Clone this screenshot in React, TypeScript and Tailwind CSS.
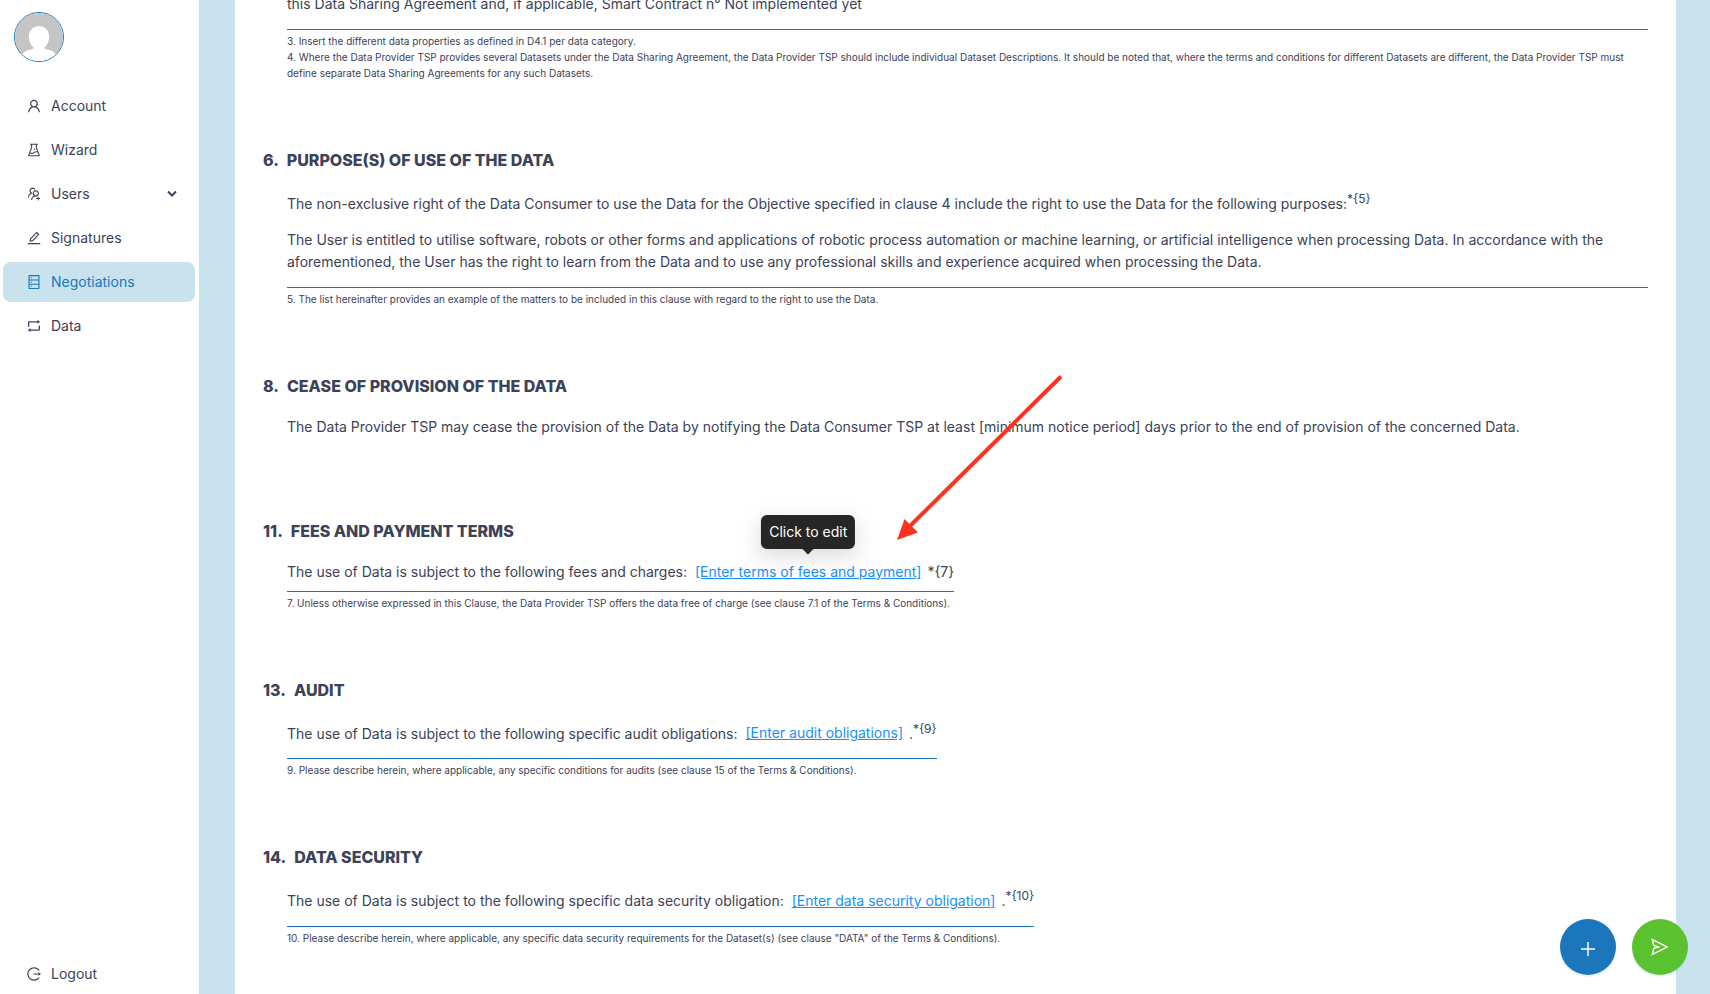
import React from 'react';
import {
  AiOutlineDatabase,
  AiOutlineEdit,
  AiOutlineExperiment,
  AiOutlineLogout,
  AiOutlinePlus,
  AiOutlineRetweet,
  AiOutlineSend,
  AiOutlineUser,
  AiOutlineUsergroupAdd,
} from 'react-icons/ai';
import type { IconType } from 'react-icons';
import clsx from 'clsx';

interface MenuEntry {
  label: string;
  icon: IconType;
  active?: boolean;
  expandable?: boolean;
}

const menu: MenuEntry[] = [
  { label: 'Account', icon: AiOutlineUser },
  { label: 'Wizard', icon: AiOutlineExperiment },
  { label: 'Users', icon: AiOutlineUsergroupAdd, expandable: true },
  { label: 'Signatures', icon: AiOutlineEdit },
  { label: 'Negotiations', icon: AiOutlineDatabase, active: true },
  { label: 'Data', icon: AiOutlineRetweet },
];

function MenuItem({ label, icon: Icon, active, expandable }: MenuEntry) {
  return (
    <a
      href="#"
      className={clsx(
        'flex h-10 items-center rounded-lg pr-4.5 pl-[23px]',
        active ? 'bg-[#c8e3ee] text-[#1b76bc]' : 'text-[#3c4257]'
      )}
    >
      <Icon className="size-4 shrink-0" />
      <span className="ml-[9px] flex-1">{label}</span>
      {expandable && (
        <svg viewBox="0 0 10 10" className="size-2.5" fill="none" stroke="currentColor" strokeWidth="2">
          <path d="M1 2.5 5 6.5 9 2.5" />
        </svg>
      )}
    </a>
  );
}

function Avatar() {
  return (
    <svg viewBox="0 0 50 50" className="size-12.5 rounded-full border border-[#1b76bc]" role="img" aria-label="Profile">
      <rect width="50" height="50" fill="#c5c5c5" />
      <path
        fill="#fff"
        d="M25 13.5c6 0 10.600 4.600 10.600 11 0 5-2.300 9-4.800 11.300-.6 1.700.4 2 2.600 2.300 4.600.7 8.100 2.600 10.100 7V50h-37v-4.900c2-4.400 5.500-6.300 10.100-7 2.200-.3 3.200-.6 2.600-2.300-2.500-2.300-4.800-6.300-4.800-11.300 0-6.400 4.600-11 10.600-11Z"
      />
    </svg>
  );
}

interface ClauseProps {
  number: number;
  title: string;
  children: React.ReactNode;
}

function Clause({ number, title, children }: ClauseProps) {
  return (
    <section className="mt-[67px] flow-root">
      <h2 className="mb-4.5 text-base leading-6 font-extrabold">
        <span className="mr-2">{number}.</span>
        {title}
      </h2>
      <div className="w-fit pl-6">{children}</div>
    </section>
  );
}

function Footnotes({ children }: { children: React.ReactNode }) {
  return <div className="border-t border-[#1b76bc] pt-[3px] text-[10px] leading-4">{children}</div>;
}

function NoteRef({ id }: { id: number }) {
  return <sup className="static align-super text-xs leading-4.5">*{`{${id}}`}</sup>;
}

function Editable({ children, tooltip }: { children: React.ReactNode; tooltip?: string }) {
  return (
    <span className="relative mr-0.5 ml-1 inline-block">
      <button type="button" className="text-[#1890ff] underline">
        {children}
      </button>
      {tooltip && (
        <span
          role="tooltip"
          className="absolute bottom-full left-1/2 mb-3 -translate-x-1/2 rounded-md bg-[#262626] px-2 py-1.5 whitespace-nowrap text-white shadow-[0_6px_16px_rgba(0,0,0,0.08),0_9px_28px_8px_rgba(0,0,0,0.05)]"
        >
          {tooltip}
          <svg viewBox="0 0 14 6" className="absolute top-full left-1/2 h-1.5 w-3.5 -translate-x-1/2" fill="#262626">
            <path d="M0 0h14c-1.500 0-2.300.6-3 1.300L8 4.800c-.6.600-1.400.6-2 0L3 1.300C2.300.6 1.500 0 0 0Z" />
          </svg>
        </span>
      )}
    </span>
  );
}

export default function App() {
  return (
    <div className="relative flex h-screen overflow-hidden bg-[#c8e3ee] font-['Inter',sans-serif] text-sm leading-5.5 text-[#3c4257]">
      <aside className="flex w-[199px] shrink-0 flex-col bg-white pt-3">
        <div className="pl-3.5">
          <Avatar />
        </div>
        <nav className="mt-6 flex flex-1 flex-col gap-1 pr-1 pl-[3px]">
          {menu.map((entry) => (
            <MenuItem key={entry.label} {...entry} />
          ))}
          <div className="mt-auto">
            <MenuItem label="Logout" icon={AiOutlineLogout} />
          </div>
        </nav>
      </aside>

      <main className="mr-[34px] ml-9 flex-1 overflow-hidden bg-white px-7">
        <div className="-mt-[7px] pl-6">
          <p className="mb-3.5">this Data Sharing Agreement and, if applicable, Smart Contract n° Not implemented yet</p>
          <Footnotes>
            <p>3. Insert the different data properties as defined in D4.1 per data category.</p>
            <p>
              4. Where the Data Provider TSP provides several Datasets under the Data Sharing Agreement, the Data
              Provider TSP should include individual Dataset Descriptions. It should be noted that, where the terms
              and conditions for different Datasets are different, the Data Provider TSP must define separate Data
              Sharing Agreements for any such Datasets.
            </p>
          </Footnotes>
        </div>

        <Clause number={6} title="PURPOSE(S) OF USE OF THE DATA">
          <p className="mb-3.5">
            The non-exclusive right of the Data Consumer to use the Data for the Objective specified in clause 4
            include the right to use the Data for the following purposes:
            <NoteRef id={5} />
          </p>
          <p className="mb-3.5">
            The User is entitled to utilise software, robots or other forms and applications of robotic process
            automation or machine learning, or artificial intelligence when processing Data. In accordance with the
            aforementioned, the User has the right to learn from the Data and to use any professional skills and
            experience acquired when processing the Data.
          </p>
          <Footnotes>
            5. The list hereinafter provides an example of the matters to be included in this clause with regard to
            the right to use the Data.
          </Footnotes>
        </Clause>

        <Clause number={8} title="CEASE OF PROVISION OF THE DATA">
          <p className="mb-3.5">
            The Data Provider TSP may cease the provision of the Data by notifying the Data Consumer TSP at least
            [minimum notice period] days prior to the end of provision of the concerned Data.
          </p>
        </Clause>

        <Clause number={11} title="FEES AND PAYMENT TERMS">
          <div className="mb-2">
            The use of Data is subject to the following fees and charges:{' '}
            <Editable tooltip="Click to edit">[Enter terms of fees and payment]</Editable> *{'{7}'}
          </div>
          <Footnotes>
            7. Unless otherwise expressed in this Clause, the Data Provider TSP offers the data free of charge (see
            clause 7.1 of the Terms &amp; Conditions).
          </Footnotes>
        </Clause>

        <Clause number={13} title="AUDIT">
          <p className="mb-3.5">
            The use of Data is subject to the following specific audit obligations:{' '}
            <Editable>[Enter audit obligations]</Editable> .<NoteRef id={9} />
          </p>
          <Footnotes>
            9. Please describe herein, where applicable, any specific conditions for audits (see clause 15 of the
            Terms &amp; Conditions).
          </Footnotes>
        </Clause>

        <Clause number={14} title="DATA SECURITY">
          <p className="mb-3.5">
            The use of Data is subject to the following specific data security obligation:{' '}
            <Editable>[Enter data security obligation]</Editable> .<NoteRef id={10} />
          </p>
          <Footnotes>
            10. Please describe herein, where applicable, any specific data security requirements for the Dataset(s)
            (see clause "DATA" of the Terms &amp; Conditions).
          </Footnotes>
        </Clause>
      </main>

      <svg
        viewBox="0 0 168 168"
        className="pointer-events-none absolute top-[374px] left-[896px] size-42"
        aria-hidden="true"
      >
        <path d="M165 2.500 14 152" stroke="#fc3320" strokeWidth="4" fill="none" />
        <path d="M1 166 8.500 145 22 158.500Z" fill="#fc3320" />
      </svg>

      <div className="absolute right-[22px] bottom-[19px] flex gap-4">
        <button
          type="button"
          aria-label="Add"
          className="flex size-14 items-center justify-center rounded-full bg-[#1b76bc] pt-1 text-white shadow-[0_2px_0_rgba(5,145,255,0.1)]"
        >
          <AiOutlinePlus className="size-5" />
        </button>
        <button
          type="button"
          aria-label="Send"
          className="flex size-14 items-center justify-center rounded-full bg-[#5ac22f] text-white shadow-[0_2px_0_rgba(5,145,255,0.1)]"
        >
          <AiOutlineSend className="size-5" />
        </button>
      </div>
    </div>
  );
}
